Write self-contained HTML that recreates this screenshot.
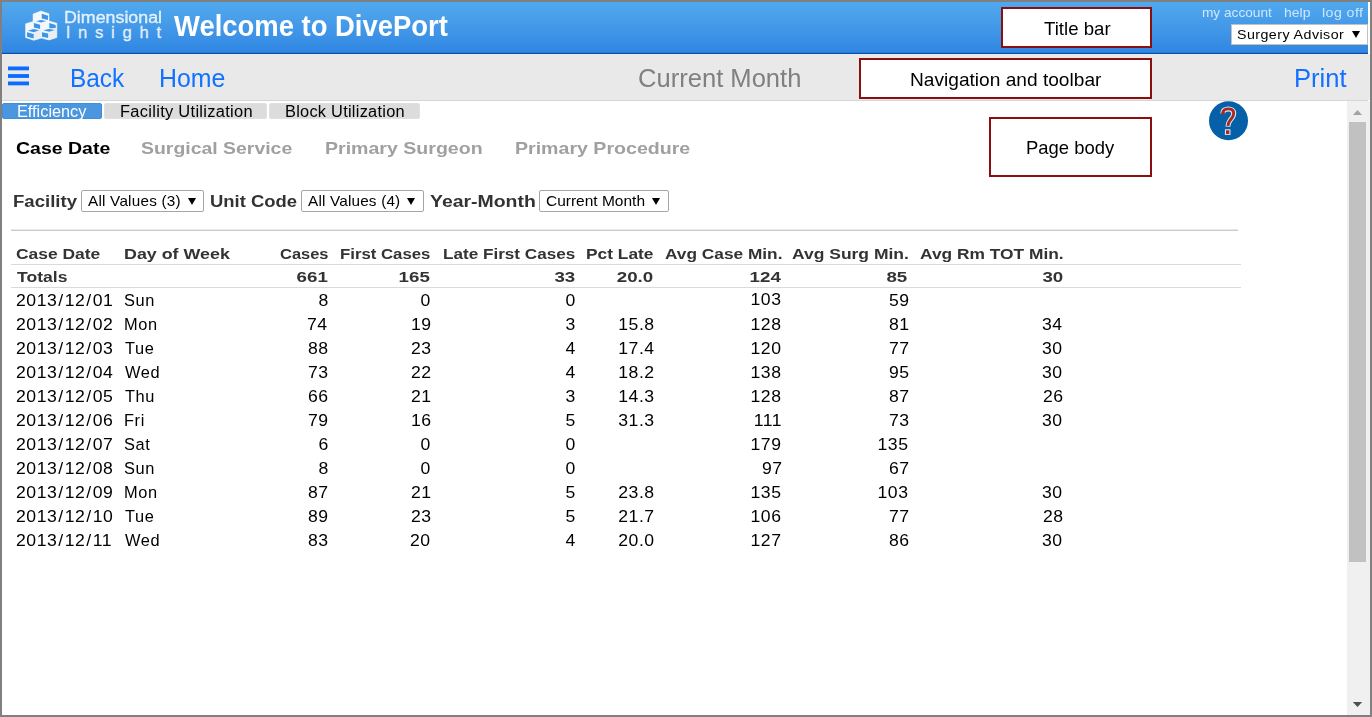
<!DOCTYPE html>
<html lang="en">
<head>
<meta charset="utf-8">
<title>Welcome to DivePort</title>
<style>
*{box-sizing:border-box;margin:0;padding:0}
html,body{width:1372px;height:717px;overflow:hidden;background:#fff}
body{font-family:"Liberation Sans",sans-serif;position:relative}
#frame{position:absolute;left:0;top:0;width:1372px;height:717px;border:2px solid #808080;z-index:50;pointer-events:none}
.abs{position:absolute}
.t{position:absolute;white-space:pre;display:block}
#titlebar{left:2px;top:2px;width:1366px;height:51px;background:linear-gradient(#4fa9ee 0%,#4a9fea 30%,#3b91e6 70%,#2f86e2 100%)}
#titleline{left:2px;top:52px;width:1366px;height:2px;background:linear-gradient(#2878d6 0%,#2878d6 50%,#0b4dab 50%,#0b4dab 100%)}
#toolbar{left:2px;top:54px;width:1368px;height:46px;background:#e9e9e9}
#toolline{left:2px;top:100px;width:1366px;height:1px;background:#d6d6d6}
.note{position:absolute;background:#fff;border:2px solid #8b0f0f}
.tab{position:absolute;top:103px;height:16px;background:#dcdcdc;border:1px solid #e1e1e1;border-radius:2px}
.tab.on{background:#4a97e0;border-color:#3d90e0}
.sel{position:absolute;background:#fff;border:1px solid #a6a6a6;border-radius:2px}
.arr{position:absolute;width:0;height:0;border-left:4px solid transparent;border-right:4px solid transparent;border-top:7.4px solid #000}
.bar{position:absolute;left:8px;width:21px;height:3.6px;background:#0a6cff}
.hl{position:absolute;height:1px;background:#dadada}
#sb{left:1347px;top:101px;width:23px;height:614px;background:#f0f0f0}
#thumb{left:1349px;top:122px;width:17px;height:440px;background:#c1c1c1}
</style>
</head>
<body>
<!-- title bar -->
<div id="titlebar" class="abs"></div>
<div id="titleline" class="abs"></div>
<svg class="abs" style="left:20px;top:6px;filter:blur(.35px)" width="44" height="40" viewBox="0 0 44 40">
  <polygon points="20.9,5 29,7.8 29,15.1 36.8,17.3 36.8,31.5 29,34 21.5,32.1 13.7,34.3 5.6,31.5 5.6,17.8 13.1,15.6 13.1,8.1" fill="#fff" fill-opacity=".93" stroke="#fff" stroke-opacity=".5" stroke-width="1" stroke-linejoin="round"/>
  <polygon points="29,22.6 36.8,19.5 36.8,31.5 29,34" fill="#e9e9e9" fill-opacity=".6"/>
  <polygon points="13.9,26.5 21.5,23.5 21.5,32.1 13.7,34.3" fill="#e9e9e9" fill-opacity=".6"/>
  <g fill="#3e95e7">
    <polygon points="21.75,7.8 28.2,9.8 27.9,13.9 21.75,12.5"/>
    <polygon points="16.2,15.3 20.9,13.9 26.2,15.1 21.2,16.5"/>
    <polygon points="13.9,17 20.1,18.7 20.1,22.9 13.9,21.5"/>
    <polygon points="29.3,17 35.7,19 35.7,22 29.3,22.3"/>
    <polygon points="7.8,24.8 13.7,23.1 19.2,24.3 13.7,26.2"/>
    <polygon points="7,26.2 13.7,27.9 13.7,32.6 7,30.7"/>
    <polygon points="23.1,24.3 29,22.9 34.9,24 29,25.7"/>
    <polygon points="22,26.2 28.2,27.6 28.2,32.1 22,30.7"/>
  </g>
</svg>
<div class="note" style="left:1001px;top:7px;width:151px;height:41px"></div>
<div class="sel" style="left:1231px;top:24px;width:137px;height:21px;border-color:#c4c0bc;border-radius:0"></div>
<div class="arr" style="left:1351.6px;top:30.6px"></div>

<!-- navigation / toolbar -->
<div id="toolbar" class="abs"></div>
<div id="toolline" class="abs"></div>
<svg class="abs" style="left:6px;top:62px" width="26" height="28" viewBox="0 0 26 28">
  <g fill="#0a6cff"><rect x="2" y="4.5" width="21" height="3.8"/><rect x="2" y="12.1" width="21" height="3.8"/><rect x="2" y="19.5" width="21" height="3.8"/></g>
</svg>
<div class="note" style="left:859px;top:58px;width:293px;height:41px"></div>

<!-- tabs -->
<div class="tab on" style="left:2px;width:100px"></div>
<div class="tab" style="left:104px;width:163px"></div>
<div class="tab" style="left:269px;width:151px"></div>

<!-- page body -->
<div class="note" style="left:989px;top:117px;width:163px;height:60px"></div>
<svg class="abs" style="left:1208px;top:100px" width="42" height="42" viewBox="0 0 42 42">
  <circle cx="20.5" cy="20.7" r="19.5" fill="#0560a8"/>
  <g fill="none" stroke-linecap="butt" stroke-linejoin="round">
    <path id="qm" d="M14.9 13.4 C14.7 10.2 17.2 8.9 20.3 8.9 C23.8 8.9 25.7 10.8 25.7 13.4 C25.7 16.3 23.8 18.2 22.2 20.2 C20.7 22 20 23.6 19.9 26.6" stroke="#dbe8f3" stroke-width="5"/>
    <rect x="16.9" y="29.2" width="5.6" height="5.9" rx=".6" fill="#dbe8f3" stroke="none"/>
    <path d="M14.9 13.4 C14.7 10.2 17.2 8.9 20.3 8.9 C23.8 8.9 25.7 10.8 25.7 13.4 C25.7 16.3 23.8 18.2 22.2 20.2 C20.7 22 20 23.6 19.9 25.9" stroke="#a9291f" stroke-width="2.9"/>
    <circle cx="15.1" cy="13.1" r="1.7" fill="#a9291f" stroke="none"/>
    <rect x="18" y="30.3" width="3.4" height="3.8" fill="#a9291f" stroke="none"/>
  </g>
</svg>
<div class="sel" style="left:81px;top:190px;width:123px;height:22px"></div>
<div class="arr" style="left:187.8px;top:198px"></div>
<div class="sel" style="left:301px;top:190px;width:123px;height:22px"></div>
<div class="arr" style="left:407.4px;top:198px"></div>
<div class="sel" style="left:539px;top:190px;width:130px;height:22px"></div>
<div class="arr" style="left:652.3px;top:198px"></div>

<div class="abs" style="left:11px;top:229px;width:1227px;height:1px;background:#e9e9e9"></div>
<div class="abs" style="left:11px;top:230px;width:1227px;height:1px;background:#cbcbcb"></div>
<div class="hl" style="left:11px;top:264px;width:1230px"></div>
<div class="hl" style="left:11px;top:287px;width:1230px"></div>

<!-- scrollbar -->
<div id="sb" class="abs"></div>
<div id="thumb" class="abs"></div>
<svg class="abs" style="left:1347px;top:101px" width="23" height="614" viewBox="0 0 23 614">
  <polygon points="6,14 15,14 10.5,9" fill="#a3a3a3"/>
  <polygon points="5.8,601 15.2,601 10.5,606" fill="#505050"/>
</svg>

<span class="t" style="font-size:17.4px;line-height:17.4px;top:9px;left:63.80px;transform-origin:0 0;transform:scaleX(1.0244);color:rgba(255,255,255,.82);-webkit-text-stroke:.35px rgba(255,255,255,.8);">Dimensional</span>
<span class="t" style="font-size:16.6px;line-height:16.6px;top:25px;letter-spacing:7.752px;left:65.70px;color:rgba(255,255,255,.82);-webkit-text-stroke:.35px rgba(255,255,255,.8);">Insight</span>
<span class="t" style="font-size:29px;line-height:29px;top:12px;font-weight:700;left:173.80px;transform-origin:0 0;transform:scaleX(0.9456);color:#fff;">Welcome to DivePort</span>
<span class="t" style="font-size:13.6px;line-height:13.6px;top:6px;left:1201.80px;transform-origin:0 0;transform:scaleX(1.0044);color:#cfe6fb;">my account</span>
<span class="t" style="font-size:13.6px;line-height:13.6px;top:6px;left:1283.70px;transform-origin:0 0;transform:scaleX(1.0295);color:#cfe6fb;">help</span>
<span class="t" style="font-size:13.6px;line-height:13.6px;top:6px;letter-spacing:0.416px;left:1321.70px;transform-origin:0 0;transform:scaleX(1.0435);color:#cfe6fb;">log off</span>
<span class="t" style="font-size:13.5px;line-height:13.5px;top:28px;letter-spacing:0.427px;left:1237.30px;transform-origin:0 0;transform:scaleX(1.0546);color:#000;">Surgery Advisor</span>
<span class="t" style="font-size:25px;line-height:25px;top:66px;left:69.70px;transform-origin:0 0;transform:scaleX(0.9767);color:#1271ff;">Back</span>
<span class="t" style="font-size:25px;line-height:25px;top:66px;left:158.70px;transform-origin:0 0;transform:scaleX(0.9952);color:#1271ff;">Home</span>
<span class="t" style="font-size:25px;line-height:25px;top:66px;left:637.70px;transform-origin:0 0;transform:scaleX(1.0227);color:#808080;">Current Month</span>
<span class="t" style="font-size:25px;line-height:25px;top:66px;left:1293.90px;transform-origin:0 0;transform:scaleX(1.0213);color:#1271ff;">Print</span>
<span class="t" style="font-size:19px;line-height:19px;top:19px;left:1043.70px;transform-origin:0 0;transform:scaleX(0.9803);color:#000;">Title bar</span>
<span class="t" style="font-size:19px;line-height:19px;top:70px;left:909.70px;transform-origin:0 0;transform:scaleX(1.0067);color:#000;">Navigation and toolbar</span>
<span class="t" style="font-size:19px;line-height:19px;top:138px;left:1026.40px;transform-origin:0 0;transform:scaleX(0.9709);color:#000;">Page body</span>
<span class="t" style="font-size:16px;line-height:16px;top:104px;left:16.70px;transform-origin:0 0;transform:scaleX(1.0179);color:#fff;">Efficiency</span>
<span class="t" style="font-size:16px;line-height:16px;top:104px;letter-spacing:0.287px;left:120.00px;transform-origin:0 0;transform:scaleX(1.0275);color:#000;">Facility Utilization</span>
<span class="t" style="font-size:16px;line-height:16px;top:104px;letter-spacing:0.256px;left:285.10px;transform-origin:0 0;transform:scaleX(1.0220);color:#000;">Block Utilization</span>
<span class="t" style="font-size:16.7px;line-height:16.7px;top:141px;font-weight:700;left:15.70px;transform-origin:0 0;transform:scaleX(1.1676);color:#000;">Case Date</span>
<span class="t" style="font-size:16.7px;line-height:16.7px;top:141px;font-weight:700;left:141.30px;transform-origin:0 0;transform:scaleX(1.1643);color:#a0a0a0;">Surgical Service</span>
<span class="t" style="font-size:16.7px;line-height:16.7px;top:141px;font-weight:700;left:324.80px;transform-origin:0 0;transform:scaleX(1.1722);color:#a0a0a0;">Primary Surgeon</span>
<span class="t" style="font-size:16.7px;line-height:16.7px;top:141px;font-weight:700;left:514.90px;transform-origin:0 0;transform:scaleX(1.1732);color:#a0a0a0;">Primary Procedure</span>
<span class="t" style="font-size:17.4px;line-height:17.4px;top:193px;font-weight:700;left:13.00px;transform-origin:0 0;transform:scaleX(1.0680);color:#333;">Facility</span>
<span class="t" style="font-size:17.4px;line-height:17.4px;top:193px;font-weight:700;left:210.20px;transform-origin:0 0;transform:scaleX(1.0597);color:#333;">Unit Code</span>
<span class="t" style="font-size:17.4px;line-height:17.4px;top:193px;font-weight:700;left:430.20px;transform-origin:0 0;transform:scaleX(1.1176);color:#333;">Year-Month</span>
<span class="t" style="font-size:15px;line-height:15px;top:193px;letter-spacing:0.215px;left:87.90px;transform-origin:0 0;transform:scaleX(1.0188);color:#000;">All Values (3)</span>
<span class="t" style="font-size:15px;line-height:15px;top:193px;letter-spacing:0.170px;left:308.20px;transform-origin:0 0;transform:scaleX(1.0210);color:#000;">All Values (4)</span>
<span class="t" style="font-size:15px;line-height:15px;top:193px;left:545.70px;transform-origin:0 0;transform:scaleX(1.0329);color:#000;">Current Month</span>
<span class="t" style="font-size:15.5px;line-height:15.5px;top:246px;font-weight:700;left:15.70px;transform-origin:0 0;transform:scaleX(1.1236);color:#333;">Case Date</span>
<span class="t" style="font-size:15.5px;line-height:15.5px;top:246px;font-weight:700;left:123.90px;transform-origin:0 0;transform:scaleX(1.1516);color:#333;">Day of Week</span>
<span class="t" style="font-size:15.5px;line-height:15.5px;top:246px;font-weight:700;left:279.70px;transform-origin:0 0;transform:scaleX(1.0609);color:#333;">Cases</span>
<span class="t" style="font-size:15.5px;line-height:15.5px;top:246px;font-weight:700;left:339.60px;transform-origin:0 0;transform:scaleX(1.0818);color:#333;">First Cases</span>
<span class="t" style="font-size:15.5px;line-height:15.5px;top:246px;font-weight:700;left:442.70px;transform-origin:0 0;transform:scaleX(1.1041);color:#333;">Late First Cases</span>
<span class="t" style="font-size:15.5px;line-height:15.5px;top:246px;font-weight:700;left:586.30px;transform-origin:0 0;transform:scaleX(1.1183);color:#333;">Pct Late</span>
<span class="t" style="font-size:15.5px;line-height:15.5px;top:246px;font-weight:700;left:664.50px;transform-origin:0 0;transform:scaleX(1.1145);color:#333;">Avg Case Min.</span>
<span class="t" style="font-size:15.5px;line-height:15.5px;top:246px;font-weight:700;left:792.00px;transform-origin:0 0;transform:scaleX(1.1275);color:#333;">Avg Surg Min.</span>
<span class="t" style="font-size:15.5px;line-height:15.5px;top:246px;font-weight:700;left:919.60px;transform-origin:0 0;transform:scaleX(1.1195);color:#333;">Avg Rm TOT Min.</span>
<span class="t" style="font-size:15.5px;line-height:15.5px;top:269px;font-weight:700;left:16.70px;transform-origin:0 0;transform:scaleX(1.1326);color:#333;">Totals</span>
<span class="t" style="font-size:15.5px;line-height:15.5px;top:269px;font-weight:700;right:1044.45px;transform-origin:100% 0;transform:scaleX(1.2078);color:#333;">661</span>
<span class="t" style="font-size:15.5px;line-height:15.5px;top:269px;font-weight:700;right:942.05px;transform-origin:100% 0;transform:scaleX(1.2078);color:#333;">165</span>
<span class="t" style="font-size:15.5px;line-height:15.5px;top:269px;font-weight:700;right:797.16px;transform-origin:100% 0;transform:scaleX(1.2078);color:#333;">33</span>
<span class="t" style="font-size:15.5px;line-height:15.5px;top:269px;font-weight:700;right:718.66px;transform-origin:100% 0;transform:scaleX(1.2078);color:#333;">20.0</span>
<span class="t" style="font-size:15.5px;line-height:15.5px;top:269px;font-weight:700;right:591.15px;transform-origin:100% 0;transform:scaleX(1.2078);color:#333;">124</span>
<span class="t" style="font-size:15.5px;line-height:15.5px;top:269px;font-weight:700;right:464.46px;transform-origin:100% 0;transform:scaleX(1.2078);color:#333;">85</span>
<span class="t" style="font-size:15.5px;line-height:15.5px;top:269px;font-weight:700;right:309.16px;transform-origin:100% 0;transform:scaleX(1.2078);color:#333;">30</span>
<span class="t" style="font-size:16.8px;line-height:16.8px;top:293px;letter-spacing:0.494px;left:15.70px;transform-origin:0 0;transform:scaleX(1.0500);color:#000;">2013<span style="margin:0 0.940px">/</span>12<span style="margin:0 0.940px">/</span>01</span>
<span class="t" style="font-size:16.8px;line-height:16.8px;top:293px;letter-spacing:0.614px;left:123.50px;transform-origin:0 0;transform:scaleX(0.9765);color:#000;">Sun</span>
<span class="t" style="font-size:16.8px;line-height:16.8px;top:293px;letter-spacing:0.494px;right:1043.37px;transform-origin:100% 0;transform:scaleX(1.0500);color:#000;">8</span>
<span class="t" style="font-size:16.8px;line-height:16.8px;top:293px;letter-spacing:0.494px;right:940.97px;transform-origin:100% 0;transform:scaleX(1.0500);color:#000;">0</span>
<span class="t" style="font-size:16.8px;line-height:16.8px;top:293px;letter-spacing:0.494px;right:796.67px;transform-origin:100% 0;transform:scaleX(1.0500);color:#000;">0</span>
<span class="t" style="font-size:16.8px;line-height:16.8px;top:292px;letter-spacing:0.494px;right:590.44px;transform-origin:100% 0;transform:scaleX(1.0500);color:#000;">103</span>
<span class="t" style="font-size:16.8px;line-height:16.8px;top:293px;letter-spacing:0.494px;right:462.66px;transform-origin:100% 0;transform:scaleX(1.0500);color:#000;">59</span>
<span class="t" style="font-size:16.8px;line-height:16.8px;top:317px;letter-spacing:0.494px;left:15.70px;transform-origin:0 0;transform:scaleX(1.0500);color:#000;">2013<span style="margin:0 0.940px">/</span>12<span style="margin:0 0.940px">/</span>02</span>
<span class="t" style="font-size:16.8px;line-height:16.8px;top:317px;letter-spacing:0.614px;left:123.50px;transform-origin:0 0;transform:scaleX(0.9765);color:#000;">Mon</span>
<span class="t" style="font-size:16.8px;line-height:16.8px;top:317px;letter-spacing:0.494px;right:1044.06px;transform-origin:100% 0;transform:scaleX(1.0500);color:#000;">74</span>
<span class="t" style="font-size:16.8px;line-height:16.8px;top:317px;letter-spacing:0.494px;right:940.66px;transform-origin:100% 0;transform:scaleX(1.0500);color:#000;">19</span>
<span class="t" style="font-size:16.8px;line-height:16.8px;top:317px;letter-spacing:0.494px;right:796.67px;transform-origin:100% 0;transform:scaleX(1.0500);color:#000;">3</span>
<span class="t" style="font-size:16.8px;line-height:16.8px;top:317px;letter-spacing:0.494px;right:717.72px;transform-origin:100% 0;transform:scaleX(1.0500);color:#000;">15.8</span>
<span class="t" style="font-size:16.8px;line-height:16.8px;top:317px;letter-spacing:0.494px;right:590.44px;transform-origin:100% 0;transform:scaleX(1.0500);color:#000;">128</span>
<span class="t" style="font-size:16.8px;line-height:16.8px;top:317px;letter-spacing:0.494px;right:462.66px;transform-origin:100% 0;transform:scaleX(1.0500);color:#000;">81</span>
<span class="t" style="font-size:16.8px;line-height:16.8px;top:317px;letter-spacing:0.494px;right:309.36px;transform-origin:100% 0;transform:scaleX(1.0500);color:#000;">34</span>
<span class="t" style="font-size:16.8px;line-height:16.8px;top:341px;letter-spacing:0.494px;left:15.70px;transform-origin:0 0;transform:scaleX(1.0500);color:#000;">2013<span style="margin:0 0.940px">/</span>12<span style="margin:0 0.940px">/</span>03</span>
<span class="t" style="font-size:16.8px;line-height:16.8px;top:341px;letter-spacing:0.614px;left:124.50px;transform-origin:0 0;transform:scaleX(0.9765);color:#000;">Tue</span>
<span class="t" style="font-size:16.8px;line-height:16.8px;top:341px;letter-spacing:0.494px;right:1043.06px;transform-origin:100% 0;transform:scaleX(1.0500);color:#000;">88</span>
<span class="t" style="font-size:16.8px;line-height:16.8px;top:341px;letter-spacing:0.494px;right:940.66px;transform-origin:100% 0;transform:scaleX(1.0500);color:#000;">23</span>
<span class="t" style="font-size:16.8px;line-height:16.8px;top:341px;letter-spacing:0.494px;right:796.67px;transform-origin:100% 0;transform:scaleX(1.0500);color:#000;">4</span>
<span class="t" style="font-size:16.8px;line-height:16.8px;top:341px;letter-spacing:0.494px;right:717.72px;transform-origin:100% 0;transform:scaleX(1.0500);color:#000;">17.4</span>
<span class="t" style="font-size:16.8px;line-height:16.8px;top:341px;letter-spacing:0.494px;right:590.44px;transform-origin:100% 0;transform:scaleX(1.0500);color:#000;">120</span>
<span class="t" style="font-size:16.8px;line-height:16.8px;top:341px;letter-spacing:0.494px;right:462.66px;transform-origin:100% 0;transform:scaleX(1.0500);color:#000;">77</span>
<span class="t" style="font-size:16.8px;line-height:16.8px;top:341px;letter-spacing:0.494px;right:309.36px;transform-origin:100% 0;transform:scaleX(1.0500);color:#000;">30</span>
<span class="t" style="font-size:16.8px;line-height:16.8px;top:365px;letter-spacing:0.494px;left:15.70px;transform-origin:0 0;transform:scaleX(1.0500);color:#000;">2013<span style="margin:0 0.940px">/</span>12<span style="margin:0 0.940px">/</span>04</span>
<span class="t" style="font-size:16.8px;line-height:16.8px;top:365px;letter-spacing:0.614px;left:124.50px;transform-origin:0 0;transform:scaleX(0.9765);color:#000;">Wed</span>
<span class="t" style="font-size:16.8px;line-height:16.8px;top:365px;letter-spacing:0.494px;right:1043.06px;transform-origin:100% 0;transform:scaleX(1.0500);color:#000;">73</span>
<span class="t" style="font-size:16.8px;line-height:16.8px;top:365px;letter-spacing:0.494px;right:940.66px;transform-origin:100% 0;transform:scaleX(1.0500);color:#000;">22</span>
<span class="t" style="font-size:16.8px;line-height:16.8px;top:365px;letter-spacing:0.494px;right:796.67px;transform-origin:100% 0;transform:scaleX(1.0500);color:#000;">4</span>
<span class="t" style="font-size:16.8px;line-height:16.8px;top:365px;letter-spacing:0.494px;right:717.72px;transform-origin:100% 0;transform:scaleX(1.0500);color:#000;">18.2</span>
<span class="t" style="font-size:16.8px;line-height:16.8px;top:365px;letter-spacing:0.494px;right:590.44px;transform-origin:100% 0;transform:scaleX(1.0500);color:#000;">138</span>
<span class="t" style="font-size:16.8px;line-height:16.8px;top:365px;letter-spacing:0.494px;right:462.66px;transform-origin:100% 0;transform:scaleX(1.0500);color:#000;">95</span>
<span class="t" style="font-size:16.8px;line-height:16.8px;top:365px;letter-spacing:0.494px;right:309.36px;transform-origin:100% 0;transform:scaleX(1.0500);color:#000;">30</span>
<span class="t" style="font-size:16.8px;line-height:16.8px;top:389px;letter-spacing:0.494px;left:15.70px;transform-origin:0 0;transform:scaleX(1.0500);color:#000;">2013<span style="margin:0 0.940px">/</span>12<span style="margin:0 0.940px">/</span>05</span>
<span class="t" style="font-size:16.8px;line-height:16.8px;top:389px;letter-spacing:0.614px;left:124.50px;transform-origin:0 0;transform:scaleX(0.9765);color:#000;">Thu</span>
<span class="t" style="font-size:16.8px;line-height:16.8px;top:389px;letter-spacing:0.494px;right:1043.06px;transform-origin:100% 0;transform:scaleX(1.0500);color:#000;">66</span>
<span class="t" style="font-size:16.8px;line-height:16.8px;top:389px;letter-spacing:0.494px;right:940.66px;transform-origin:100% 0;transform:scaleX(1.0500);color:#000;">21</span>
<span class="t" style="font-size:16.8px;line-height:16.8px;top:389px;letter-spacing:0.494px;right:796.67px;transform-origin:100% 0;transform:scaleX(1.0500);color:#000;">3</span>
<span class="t" style="font-size:16.8px;line-height:16.8px;top:389px;letter-spacing:0.494px;right:717.72px;transform-origin:100% 0;transform:scaleX(1.0500);color:#000;">14.3</span>
<span class="t" style="font-size:16.8px;line-height:16.8px;top:389px;letter-spacing:0.494px;right:590.44px;transform-origin:100% 0;transform:scaleX(1.0500);color:#000;">128</span>
<span class="t" style="font-size:16.8px;line-height:16.8px;top:389px;letter-spacing:0.494px;right:462.66px;transform-origin:100% 0;transform:scaleX(1.0500);color:#000;">87</span>
<span class="t" style="font-size:16.8px;line-height:16.8px;top:389px;letter-spacing:0.494px;right:308.36px;transform-origin:100% 0;transform:scaleX(1.0500);color:#000;">26</span>
<span class="t" style="font-size:16.8px;line-height:16.8px;top:413px;letter-spacing:0.494px;left:15.70px;transform-origin:0 0;transform:scaleX(1.0500);color:#000;">2013<span style="margin:0 0.940px">/</span>12<span style="margin:0 0.940px">/</span>06</span>
<span class="t" style="font-size:16.8px;line-height:16.8px;top:413px;letter-spacing:0.614px;left:123.50px;transform-origin:0 0;transform:scaleX(0.9765);color:#000;">Fri</span>
<span class="t" style="font-size:16.8px;line-height:16.8px;top:413px;letter-spacing:0.494px;right:1043.06px;transform-origin:100% 0;transform:scaleX(1.0500);color:#000;">79</span>
<span class="t" style="font-size:16.8px;line-height:16.8px;top:413px;letter-spacing:0.494px;right:940.66px;transform-origin:100% 0;transform:scaleX(1.0500);color:#000;">16</span>
<span class="t" style="font-size:16.8px;line-height:16.8px;top:413px;letter-spacing:0.494px;right:796.67px;transform-origin:100% 0;transform:scaleX(1.0500);color:#000;">5</span>
<span class="t" style="font-size:16.8px;line-height:16.8px;top:413px;letter-spacing:0.494px;right:717.72px;transform-origin:100% 0;transform:scaleX(1.0500);color:#000;">31.3</span>
<span class="t" style="font-size:16.8px;line-height:16.8px;top:413px;letter-spacing:0.494px;right:590.05px;transform-origin:100% 0;transform:scaleX(1.0500);color:#000;">111</span>
<span class="t" style="font-size:16.8px;line-height:16.8px;top:413px;letter-spacing:0.494px;right:462.66px;transform-origin:100% 0;transform:scaleX(1.0500);color:#000;">73</span>
<span class="t" style="font-size:16.8px;line-height:16.8px;top:413px;letter-spacing:0.494px;right:309.36px;transform-origin:100% 0;transform:scaleX(1.0500);color:#000;">30</span>
<span class="t" style="font-size:16.8px;line-height:16.8px;top:437px;letter-spacing:0.494px;left:15.70px;transform-origin:0 0;transform:scaleX(1.0500);color:#000;">2013<span style="margin:0 0.940px">/</span>12<span style="margin:0 0.940px">/</span>07</span>
<span class="t" style="font-size:16.8px;line-height:16.8px;top:437px;letter-spacing:0.614px;left:123.50px;transform-origin:0 0;transform:scaleX(0.9765);color:#000;">Sat</span>
<span class="t" style="font-size:16.8px;line-height:16.8px;top:437px;letter-spacing:0.494px;right:1043.37px;transform-origin:100% 0;transform:scaleX(1.0500);color:#000;">6</span>
<span class="t" style="font-size:16.8px;line-height:16.8px;top:437px;letter-spacing:0.494px;right:940.97px;transform-origin:100% 0;transform:scaleX(1.0500);color:#000;">0</span>
<span class="t" style="font-size:16.8px;line-height:16.8px;top:437px;letter-spacing:0.494px;right:796.67px;transform-origin:100% 0;transform:scaleX(1.0500);color:#000;">0</span>
<span class="t" style="font-size:16.8px;line-height:16.8px;top:437px;letter-spacing:0.494px;right:590.44px;transform-origin:100% 0;transform:scaleX(1.0500);color:#000;">179</span>
<span class="t" style="font-size:16.8px;line-height:16.8px;top:437px;letter-spacing:0.494px;right:463.34px;transform-origin:100% 0;transform:scaleX(1.0500);color:#000;">135</span>
<span class="t" style="font-size:16.8px;line-height:16.8px;top:461px;letter-spacing:0.494px;left:15.70px;transform-origin:0 0;transform:scaleX(1.0500);color:#000;">2013<span style="margin:0 0.940px">/</span>12<span style="margin:0 0.940px">/</span>08</span>
<span class="t" style="font-size:16.8px;line-height:16.8px;top:461px;letter-spacing:0.614px;left:123.50px;transform-origin:0 0;transform:scaleX(0.9765);color:#000;">Sun</span>
<span class="t" style="font-size:16.8px;line-height:16.8px;top:461px;letter-spacing:0.494px;right:1043.37px;transform-origin:100% 0;transform:scaleX(1.0500);color:#000;">8</span>
<span class="t" style="font-size:16.8px;line-height:16.8px;top:461px;letter-spacing:0.494px;right:940.97px;transform-origin:100% 0;transform:scaleX(1.0500);color:#000;">0</span>
<span class="t" style="font-size:16.8px;line-height:16.8px;top:461px;letter-spacing:0.494px;right:796.67px;transform-origin:100% 0;transform:scaleX(1.0500);color:#000;">0</span>
<span class="t" style="font-size:16.8px;line-height:16.8px;top:461px;letter-spacing:0.494px;right:589.76px;transform-origin:100% 0;transform:scaleX(1.0500);color:#000;">97</span>
<span class="t" style="font-size:16.8px;line-height:16.8px;top:461px;letter-spacing:0.494px;right:462.66px;transform-origin:100% 0;transform:scaleX(1.0500);color:#000;">67</span>
<span class="t" style="font-size:16.8px;line-height:16.8px;top:485px;letter-spacing:0.494px;left:15.70px;transform-origin:0 0;transform:scaleX(1.0500);color:#000;">2013<span style="margin:0 0.940px">/</span>12<span style="margin:0 0.940px">/</span>09</span>
<span class="t" style="font-size:16.8px;line-height:16.8px;top:485px;letter-spacing:0.614px;left:123.50px;transform-origin:0 0;transform:scaleX(0.9765);color:#000;">Mon</span>
<span class="t" style="font-size:16.8px;line-height:16.8px;top:485px;letter-spacing:0.494px;right:1043.06px;transform-origin:100% 0;transform:scaleX(1.0500);color:#000;">87</span>
<span class="t" style="font-size:16.8px;line-height:16.8px;top:485px;letter-spacing:0.494px;right:940.66px;transform-origin:100% 0;transform:scaleX(1.0500);color:#000;">21</span>
<span class="t" style="font-size:16.8px;line-height:16.8px;top:485px;letter-spacing:0.494px;right:796.67px;transform-origin:100% 0;transform:scaleX(1.0500);color:#000;">5</span>
<span class="t" style="font-size:16.8px;line-height:16.8px;top:485px;letter-spacing:0.494px;right:717.72px;transform-origin:100% 0;transform:scaleX(1.0500);color:#000;">23.8</span>
<span class="t" style="font-size:16.8px;line-height:16.8px;top:485px;letter-spacing:0.494px;right:590.44px;transform-origin:100% 0;transform:scaleX(1.0500);color:#000;">135</span>
<span class="t" style="font-size:16.8px;line-height:16.8px;top:485px;letter-spacing:0.494px;right:463.34px;transform-origin:100% 0;transform:scaleX(1.0500);color:#000;">103</span>
<span class="t" style="font-size:16.8px;line-height:16.8px;top:485px;letter-spacing:0.494px;right:309.36px;transform-origin:100% 0;transform:scaleX(1.0500);color:#000;">30</span>
<span class="t" style="font-size:16.8px;line-height:16.8px;top:509px;letter-spacing:0.494px;left:15.70px;transform-origin:0 0;transform:scaleX(1.0500);color:#000;">2013<span style="margin:0 0.940px">/</span>12<span style="margin:0 0.940px">/</span>10</span>
<span class="t" style="font-size:16.8px;line-height:16.8px;top:509px;letter-spacing:0.614px;left:124.50px;transform-origin:0 0;transform:scaleX(0.9765);color:#000;">Tue</span>
<span class="t" style="font-size:16.8px;line-height:16.8px;top:509px;letter-spacing:0.494px;right:1043.06px;transform-origin:100% 0;transform:scaleX(1.0500);color:#000;">89</span>
<span class="t" style="font-size:16.8px;line-height:16.8px;top:509px;letter-spacing:0.494px;right:940.66px;transform-origin:100% 0;transform:scaleX(1.0500);color:#000;">23</span>
<span class="t" style="font-size:16.8px;line-height:16.8px;top:509px;letter-spacing:0.494px;right:796.67px;transform-origin:100% 0;transform:scaleX(1.0500);color:#000;">5</span>
<span class="t" style="font-size:16.8px;line-height:16.8px;top:509px;letter-spacing:0.494px;right:717.72px;transform-origin:100% 0;transform:scaleX(1.0500);color:#000;">21.7</span>
<span class="t" style="font-size:16.8px;line-height:16.8px;top:509px;letter-spacing:0.494px;right:590.44px;transform-origin:100% 0;transform:scaleX(1.0500);color:#000;">106</span>
<span class="t" style="font-size:16.8px;line-height:16.8px;top:509px;letter-spacing:0.494px;right:462.66px;transform-origin:100% 0;transform:scaleX(1.0500);color:#000;">77</span>
<span class="t" style="font-size:16.8px;line-height:16.8px;top:509px;letter-spacing:0.494px;right:308.36px;transform-origin:100% 0;transform:scaleX(1.0500);color:#000;">28</span>
<span class="t" style="font-size:16.8px;line-height:16.8px;top:533px;letter-spacing:0.494px;left:15.70px;transform-origin:0 0;transform:scaleX(1.0500);color:#000;">2013<span style="margin:0 0.940px">/</span>12<span style="margin:0 0.940px">/</span>11</span>
<span class="t" style="font-size:16.8px;line-height:16.8px;top:533px;letter-spacing:0.614px;left:124.50px;transform-origin:0 0;transform:scaleX(0.9765);color:#000;">Wed</span>
<span class="t" style="font-size:16.8px;line-height:16.8px;top:533px;letter-spacing:0.494px;right:1043.06px;transform-origin:100% 0;transform:scaleX(1.0500);color:#000;">83</span>
<span class="t" style="font-size:16.8px;line-height:16.8px;top:533px;letter-spacing:0.494px;right:941.66px;transform-origin:100% 0;transform:scaleX(1.0500);color:#000;">20</span>
<span class="t" style="font-size:16.8px;line-height:16.8px;top:533px;letter-spacing:0.494px;right:796.67px;transform-origin:100% 0;transform:scaleX(1.0500);color:#000;">4</span>
<span class="t" style="font-size:16.8px;line-height:16.8px;top:533px;letter-spacing:0.494px;right:717.72px;transform-origin:100% 0;transform:scaleX(1.0500);color:#000;">20.0</span>
<span class="t" style="font-size:16.8px;line-height:16.8px;top:533px;letter-spacing:0.494px;right:590.44px;transform-origin:100% 0;transform:scaleX(1.0500);color:#000;">127</span>
<span class="t" style="font-size:16.8px;line-height:16.8px;top:533px;letter-spacing:0.494px;right:462.66px;transform-origin:100% 0;transform:scaleX(1.0500);color:#000;">86</span>
<span class="t" style="font-size:16.8px;line-height:16.8px;top:533px;letter-spacing:0.494px;right:309.36px;transform-origin:100% 0;transform:scaleX(1.0500);color:#000;">30</span>
<div id="frame"></div>
</body>
</html>
